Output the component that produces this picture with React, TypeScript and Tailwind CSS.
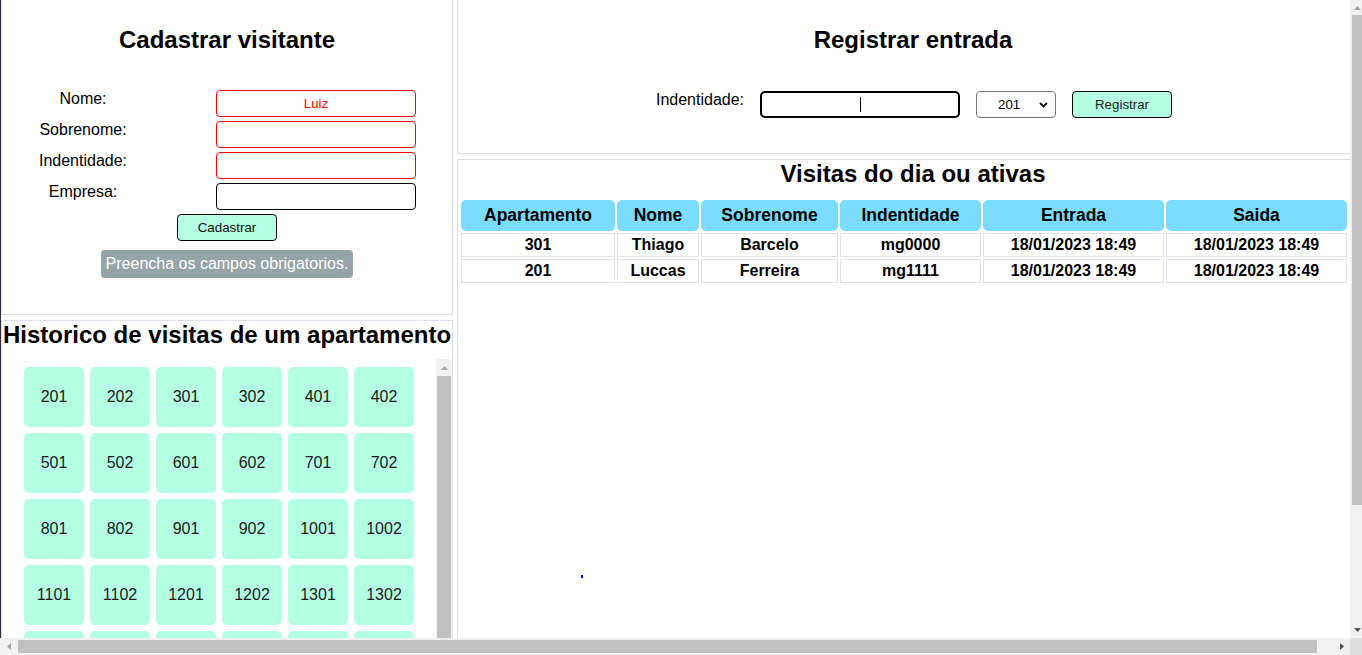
import React from "react"

// apartamentos do predio (2 por andar, do 2o ao 20o)
const apartamentos: string[] = []
for (let andar = 2; andar <= 20; andar++) {
    apartamentos.push(`${andar}01`, `${andar}02`)
}

const visitas = [
    { ap: "301", nome: "Thiago", sobrenome: "Barcelo", identidade: "mg0000", entrada: "18/01/2023 18:49", saida: "18/01/2023 18:49" },
    { ap: "201", nome: "Luccas", sobrenome: "Ferreira", identidade: "mg1111", entrada: "18/01/2023 18:49", saida: "18/01/2023 18:49" },
]

const colunas = ["Apartamento", "Nome", "Sobrenome", "Indentidade", "Entrada", "Saida"]

function Arrow({ dir, color }: { dir: "up" | "down" | "left" | "right"; color: string }) {
    const pts = {
        up: "0,4 7,4 3.5,0",
        down: "0,0 7,0 3.5,4",
        left: "4,0 4,7 0,3.5",
        right: "0,0 0,7 4,3.5",
    }[dir]
    const vertical = dir === "up" || dir === "down"
    return (
        <svg width={vertical ? 7 : 4} height={vertical ? 4 : 7} viewBox={vertical ? "0 0 7 4" : "0 0 4 7"}>
            <polygon points={pts} fill={color} />
        </svg>
    )
}

function CampoForm({ label, value, erro }: { label: string; value?: string; erro?: boolean }) {
    return (
        <div className="flex items-start h-[29px]">
            <span className="w-[162px] pt-[2px] text-center text-[16px] leading-[18px]">{label}</span>
            <input
                readOnly
                value={value ?? ""}
                className={`ml-[52px] mt-[2px] w-[200px] h-[27px] rounded-[4px] border text-center text-[13.33px] outline-none ${
                    erro ? "border-[#ff0000] text-[#ff0000]" : "border-black text-black"
                }`}
            />
        </div>
    )
}

export default function App() {
    return (
        <div className="w-[1362px] h-[655px] flex flex-col overflow-hidden bg-white text-black font-['Liberation_Sans',Arial,sans-serif]">
            <div className="flex h-[638px]">
                <div className="w-[1350px] h-full overflow-hidden border-l border-[#2f2f3d]">
                    <div className="flex gap-[4px] w-[1368px] h-full">
                        {/* coluna esquerda */}
                        <div className="w-[452px] shrink-0 flex flex-col gap-[5px]">
                            <section className="h-[315px] shrink-0 border-x border-b border-[#dedeea] flex flex-col">
                                <h2 className="pt-[26px] text-center text-[24px] leading-[28px] font-bold">Cadastrar visitante</h2>
                                <div className="mt-[34px] flex flex-col gap-[2px]">
                                    <CampoForm label="Nome:" value="Luiz" erro />
                                    <CampoForm label="Sobrenome:" erro />
                                    <CampoForm label="Indentidade:" erro />
                                    <CampoForm label="Empresa:" />
                                </div>
                                <button className="mx-auto mt-[4px] w-[100px] h-[27px] rounded-[4px] border border-black bg-[#b4ffe4] text-[13.33px] text-[#111]">
                                    Cadastrar
                                </button>
                                <div className="mx-auto mt-[9px] h-[28px] px-[5px] flex items-center rounded-[4px] bg-[#95a5a6] text-white text-[16px]">
                                    Preencha os campos obrigatorios.
                                </div>
                            </section>

                            <section className="flex-1 min-h-0 border-x border-t border-[#dedeea] flex flex-col">
                                <h2 className="text-center text-[24px] leading-[28px] font-bold whitespace-nowrap">
                                    Historico de visitas de um apartamento
                                </h2>
                                <div className="mt-[10px] flex-1 min-h-0 flex overflow-hidden">
                                    <div className="flex-1 pl-[22px] pt-[8px] overflow-hidden">
                                        <div className="grid grid-cols-[repeat(6,60px)] gap-[6px]">
                                            {apartamentos.map((ap) => (
                                                <div
                                                    key={ap}
                                                    className="h-[60px] rounded-[5px] bg-[#b4ffe4] flex items-center justify-center text-[16px] text-[#1a1a1a]"
                                                >
                                                    {ap}
                                                </div>
                                            ))}
                                        </div>
                                    </div>
                                    <div className="w-[16px] bg-[#f1f1f1] flex flex-col">
                                        <div className="h-[17px] flex items-center justify-center">
                                            <Arrow dir="up" color="#a3a3a3" />
                                        </div>
                                        <div className="flex-1 mx-[1px] bg-[#c1c1c1]" />
                                    </div>
                                </div>
                            </section>
                        </div>

                        {/* coluna direita */}
                        <div className="w-[912px] shrink-0 flex flex-col gap-[5px]">
                            <section className="h-[154px] shrink-0 border-x border-b border-[#dedeea] flex flex-col">
                                <h2 className="pt-[26px] text-center text-[24px] leading-[28px] font-bold">Registrar entrada</h2>
                                <div className="mt-[36px] pl-[2px] flex justify-center items-start gap-[16px]">
                                    <span className="pt-[1px] text-[16px] leading-[18px]">Indentidade:</span>
                                    <div className="mt-[1px] w-[200px] h-[27px] rounded-[5px] border-2 border-black flex items-center justify-center">
                                        <span className="w-[1px] h-[15px] bg-black" />
                                    </div>
                                    <div className="mt-[1px] w-[80px] h-[27px] rounded-[4px] border border-[#767676] flex items-center justify-between pl-[21px] pr-[7px] text-[13.33px]">
                                        <span>201</span>
                                        <svg width="9" height="6" viewBox="0 0 9 6">
                                            <path d="M1 1 L4.5 4.5 L8 1" fill="none" stroke="#111" strokeWidth="1.8" />
                                        </svg>
                                    </div>
                                    <button className="mt-[1px] w-[100px] h-[27px] rounded-[4px] border border-black bg-[#b4ffe4] text-[13.33px] text-[#222]">
                                        Registrar
                                    </button>
                                </div>
                            </section>

                            <section className="relative flex-1 min-h-0 border-x border-t border-[#dedeea]">
                                <h2 className="text-center text-[24px] leading-[28px] font-bold">Visitas do dia ou ativas</h2>
                                <div className="mt-[12px] ml-[3px] grid grid-cols-[154px_82px_137px_141px_181px_181px] gap-[2px]">
                                    {colunas.map((c) => (
                                        <div
                                            key={c}
                                            className="h-[31px] rounded-[5px] bg-[#7bdcfd] flex items-center justify-center text-[17.5px] font-bold"
                                        >
                                            {c}
                                        </div>
                                    ))}
                                    {visitas.map((v) =>
                                        [v.ap, v.nome, v.sobrenome, v.identidade, v.entrada, v.saida].map((cel, i) => (
                                            <div
                                                key={v.ap + i}
                                                className="h-[24px] border border-[#e0e0ee] flex items-center justify-center text-[16px] font-bold"
                                            >
                                                {cel}
                                            </div>
                                        ))
                                    )}
                                </div>
                                <span className="absolute left-[123px] top-[415px] w-[2px] h-[3px] bg-[#0000ff]" />
                            </section>
                        </div>
                    </div>
                </div>

                {/* barra de rolagem vertical da pagina */}
                <div className="w-[12px] bg-[#f1f1f1] flex flex-col">
                    <div className="h-[15px] flex items-center justify-center pl-[2px]">
                        <Arrow dir="up" color="#a3a3a3" />
                    </div>
                    <div className="h-[490px] ml-[2px] bg-[#c1c1c1]" />
                    <div className="flex-1" />
                    <div className="h-[17px] flex items-center justify-center pl-[2px]">
                        <Arrow dir="down" color="#505050" />
                    </div>
                </div>
            </div>

            {/* barra de rolagem horizontal */}
            <div className="h-[17px] flex">
                <div className="w-[1350px] bg-[#f1f1f1] flex items-center">
                    <div className="w-[17px] h-full flex items-center justify-center">
                        <Arrow dir="left" color="#a3a3a3" />
                    </div>
                    <div className="ml-[1px] w-[1299px] h-[13px] bg-[#c1c1c1]" />
                    <div className="flex-1" />
                    <div className="w-[17px] h-full flex items-center justify-center">
                        <Arrow dir="right" color="#505050" />
                    </div>
                </div>
                <div className="flex-1 bg-[#dcdcdc]" />
            </div>
        </div>
    )
}
